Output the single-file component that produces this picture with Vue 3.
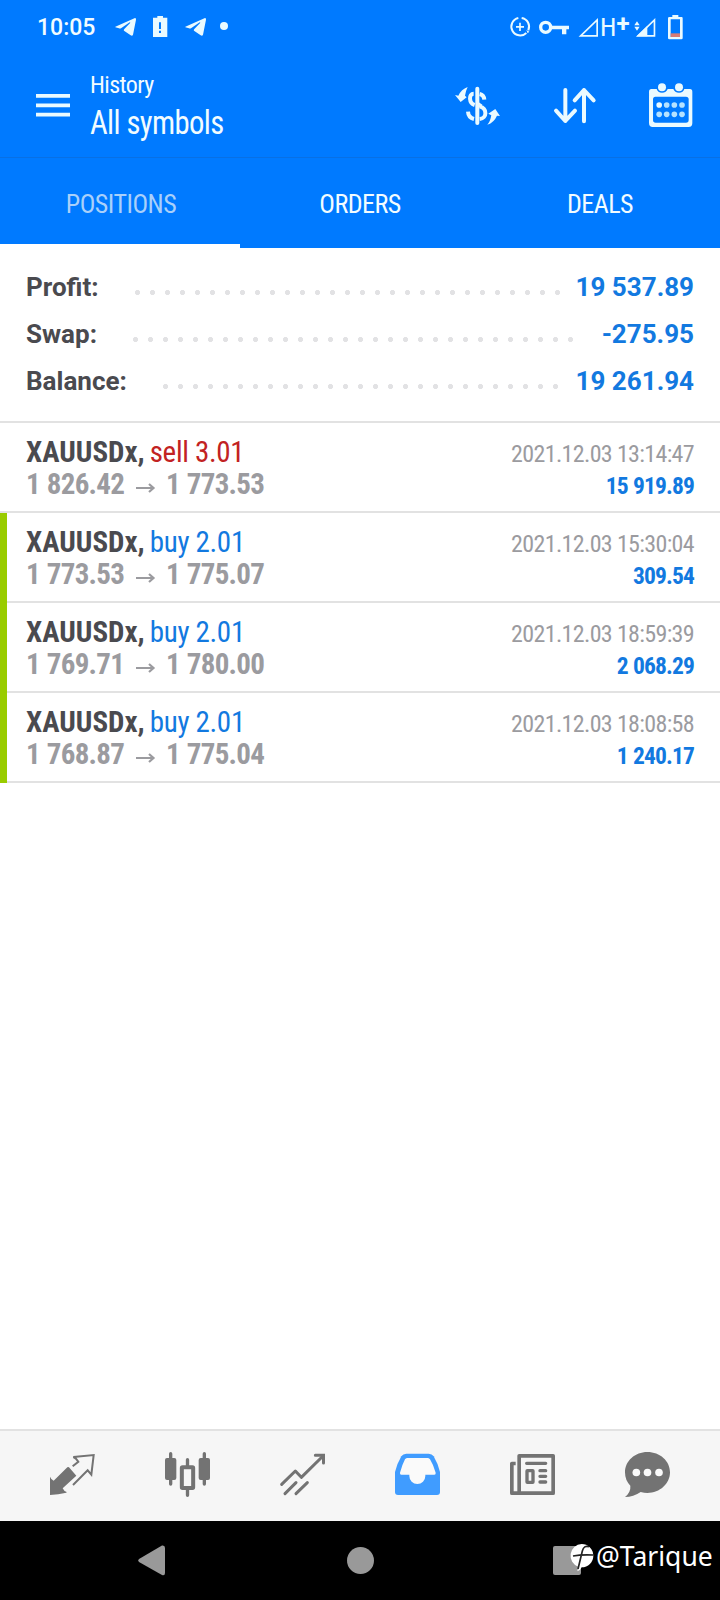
<script setup>
const tabs = ['POSITIONS', 'ORDERS', 'DEALS']
const active = 'POSITIONS'

const summary = [
  { label: 'Profit:', value: '19 537.89', start: 104, leader: 435 },
  { label: 'Swap:', value: '-275.95', start: 102, leader: 450 },
  { label: 'Balance:', value: '19 261.94', start: 132, leader: 405 },
]

const deals = [
  { symbol: 'XAUUSDx,', side: 'sell', volume: '3.01', open: '1 826.42', close: '1 773.53', time: '2021.12.03 13:14:47', profit: '15 919.89', marked: false },
  { symbol: 'XAUUSDx,', side: 'buy', volume: '2.01', open: '1 773.53', close: '1 775.07', time: '2021.12.03 15:30:04', profit: '309.54', marked: true },
  { symbol: 'XAUUSDx,', side: 'buy', volume: '2.01', open: '1 769.71', close: '1 780.00', time: '2021.12.03 18:59:39', profit: '2 068.29', marked: true },
  { symbol: 'XAUUSDx,', side: 'buy', volume: '2.01', open: '1 768.87', close: '1 775.04', time: '2021.12.03 18:08:58', profit: '1 240.17', marked: true },
]
</script>

<template>
  <div class="screen">
    <header class="top">
      <div class="status">
        <span class="clock">10:05</span>
        <svg class="tg" viewBox="0 0 63 54" width="21" height="18"><path d="M1 26 L60 0 Q64 0 63 5 L54 50 Q52 55 47 52 L27 38 Q25 36 28 33 L46 14 Q45 12 42 14 L18 31 Q15 32 12 31 L1 28z" /></svg>
        <svg class="bat-alert" viewBox="0 0 43 63" width="14.3" height="21"><path fill-rule="evenodd" d="M13 0H30V5H43V63H0V5H13zM18 19V39H24V19zM18 44V51H24V44z" /></svg>
        <svg class="tg" viewBox="0 0 63 54" width="21" height="18"><path d="M1 26 L60 0 Q64 0 63 5 L54 50 Q52 55 47 52 L27 38 Q25 36 28 33 L46 14 Q45 12 42 14 L18 31 Q15 32 12 31 L1 28z" /></svg>
        <i class="more"></i>
        <span class="grow"></span>
        <svg class="saver" viewBox="210 50 60 60" width="20" height="20"><g fill="none" stroke="#eafaff" stroke-width="6"><path d="M235 53A26.500 26.500 0 1 0 259 98" /><path d="M245 53A26.500 26.500 0 0 1 265 90" /><path d="M240 67V92M228 79.500H252" stroke-width="5" /></g><path d="M259 89L268 94L263 99z" /></svg>
        <svg class="key" viewBox="297 57 90 45" width="30" height="15"><circle cx="317" cy="79" r="15" fill="none" stroke="#eafaff" stroke-width="10" /><path d="M334 74H387V85H379V100H366V85H334z" /></svg>
        <svg class="sig" viewBox="417 52 57 57" width="19" height="19"><path d="M422 105.500L471.500 58V105.500z" fill="none" stroke="#eafaff" stroke-width="5" /></svg>
        <svg class="net" viewBox="0 0 28 22" width="28" height="22"><text y="20" font-size="26.500" font-weight="450"><tspan x="-1" class="cond">H</tspan><tspan class="plus" dx="0" dy="-4.500">+</tspan></text></svg>
        <svg class="sig2" viewBox="582 52 64 57" width="21.300" height="19"><path d="M583 74L591 62L599 74zM583 78H599L591 90z" /><path d="M594 105.500L643.500 58V105.500z" fill="none" stroke="#eafaff" stroke-width="5" /><path d="M590 107L622 76V107z" /></svg>
        <svg class="bat" viewBox="685 41 44 74" width="14.700" height="24.700"><path fill-rule="evenodd" d="M698 41H716V47H726Q729 47 729 51V110Q729 114 725 114H689Q685 114 685 110V51Q685 47 689 47H698zM693 54V107H721V54z" /><path d="M693 96H721V107H693z" fill="#d97b76" /></svg>
      </div>

      <div class="bar">
        <svg class="menu" viewBox="0 0 34 23" width="34" height="23"><path d="M0 0H34V3.700H0zM0 9.500H34V13.200H0zM0 18.800H34V22.500H0z" /></svg>
        <div class="titles">
          <div class="sub"><span>History</span></div>
          <div class="main"><span>All symbols</span></div>
        </div>
        <span class="grow"></span>
        <svg class="dollar" viewBox="45 260 136 114" width="45.300" height="38"><g fill="none" stroke="#eafaff" stroke-width="12"><path d="M112 265V368" stroke-linecap="round" /><path d="M101 280C86 280 86 308 104 314M119 281Q132 284 133 298M119 318C142 324 142 354 119 356M84 334Q85 352 102 356M112 310L124 318" /></g><path d="M83 260Q77 272 75 286L80 291L62 305L45 284L55 286Q64 267 83 260z" /><path d="M142 373Q151 364 154 345L145 340L166 326L180 347L171 346Q162 367 142 373z" /></svg>
        <svg class="sort" viewBox="341 263 126 106" width="42" height="35.300"><path d="M375 269V362M347 331L375 362L404 331M431 363V269M403 300L431 269L460 300" fill="none" stroke="#eafaff" stroke-width="12" stroke-linecap="round" stroke-linejoin="round" /></svg>
        <svg class="cal" viewBox="627 248 131 133" width="43.700" height="44.300"><path fill-rule="evenodd" d="M634 266H650Q653 277 666 277T683 266H700Q704 277 717 277T733 266H750Q757 266 757 274V368Q757 380 746 380H638Q627 380 627 368V274Q627 266 634 266zM646 289Q639 289 639 297V359Q639 367 647 367H738Q746 367 746 359V297Q746 289 738 289z" /><circle cx="666" cy="261" r="12" /><circle cx="717" cy="261" r="12" /><circle cx="657.500" cy="314" r="8.500" /><g fill="#b5e2ff"><circle cx="680" cy="314" r="8.500" /><circle cx="703" cy="314" r="8.500" /><circle cx="726" cy="314" r="8.500" /><circle cx="657.500" cy="342" r="8.500" /><circle cx="680" cy="342" r="8.500" /><circle cx="703" cy="342" r="8.500" /><circle cx="726" cy="342" r="8.500" /></g></svg>
      </div>

      <nav class="tabs">
        <div v-for="t in tabs" :key="t" class="tab" :class="{ on: t === active }"><span>{{ t }}</span></div>
      </nav>
    </header>

    <section class="summary">
      <div v-for="s in summary" :key="s.label" class="sum">
        <span class="label" :style="{ width: s.start + 'px' }">{{ s.label }}</span>
        <i class="leader" :style="{ width: s.leader + 'px' }"></i>
        <span class="total">{{ s.value }}</span>
      </div>
    </section>

    <main class="list">
      <article v-for="d in deals" :key="d.time" class="deal" :class="{ marked: d.marked }">
        <div class="line">
          <span class="sym">{{ d.symbol }}</span>
          <span class="side" :class="d.side">{{ d.side }} {{ d.volume }}</span>
          <span class="time">{{ d.time }}</span>
        </div>
        <div class="line">
          <span class="open">{{ d.open }}</span>
          <svg class="arrow" viewBox="0 0 20 12" width="20" height="12"><path d="M0 6H17M13 2L17.500 6L13 10" /></svg>
          <span class="close">{{ d.close }}</span>
          <span class="profit">{{ d.profit }}</span>
        </div>
      </article>
    </main>

    <nav class="dock">
      <svg viewBox="0 0 135 135"><path d="M0 74Q4 84 11 86L52 46Q54 44 57 46L79 71L38 109Q42 118 50 120L49 122Q25 127 0 129z" /><path class="st" stroke-width="6" d="M68 43L85 29Q78 18 70 15L131 9L124 68L113 55L69 99" /></svg>
      <svg viewBox="0 0 135 135"><rect y="18" width="34" height="66" rx="6" /><rect x="101" y="18" width="34" height="66" rx="6" /><path class="st" stroke-width="10" stroke-linecap="round" d="M17 5V96M118 5V96M67.500 23V42M67.500 110V130" /><rect class="st" x="50.500" y="46" width="34" height="62" rx="2" stroke-width="12" /></svg>
      <svg viewBox="0 0 135 135"><path class="st" stroke-width="9" stroke-linecap="round" stroke-linejoin="round" d="M5 97L46 57L64 76L129 12M15 125L48 92M48 125L82 92" /><path class="st" stroke-width="9" stroke-linecap="round" d="M106 10H130.500V33" /></svg>
      <svg class="active" viewBox="0 0 135 135"><path fill-rule="evenodd" d="M0 60Q7 33 19 13Q24 5 34 5H101Q111 5 116 13Q128 33 135 60V120Q135 129 126 129H9Q0 129 0 120z" /><path class="hole" d="M15 62Q22 37 30 22Q33 18 38 18H97Q102 18 105 22Q115 38 122 62Q123 68 118 68H91V72A24 24 0 0 1 43 72V68H19Q14 68 15 62z" /></svg>
      <svg viewBox="0 0 135 135"><path class="st" stroke-width="11" stroke-linejoin="round" d="M27.500 11.500H129.500V123.500H27.500zM17 34.500H5.500V123.500H28" /><path class="st" stroke-width="10" stroke-linecap="round" d="M50 34H107M90 56H107M90 73H107M90 90H107" /><rect class="st" x="51" y="56" width="18" height="35" rx="1" stroke-width="10" /></svg>
      <svg viewBox="0 0 135 135"><path d="M67 0C105 0 135 27 135 61S105 123 67 123Q58 123 47 120Q25 135 0 135Q18 120 16 101Q0 85 0 61C0 27 30 0 67 0z" /><g class="hole"><circle cx="34" cy="61.500" r="11.500" /><circle cx="67.500" cy="61.500" r="11.500" /><circle cx="102" cy="61.500" r="11.500" /></g></svg>
    </nav>

    <footer class="system">
      <svg class="back" viewBox="0 0 27 31" width="27" height="31"><path d="M1 14L24 .6Q27 0 27 3V28Q27 31 24 30L1 17Q-.8 15.500 1 14z" /></svg>
      <i class="home"></i>
      <i class="recent"></i>
      <div class="watermark">
        <svg viewBox="0 0 72 84" width="24" height="28"><path d="M35 0A35 35 0 0 1 35 70Q31 80 22 82L25 68A35 35 0 0 1 35 0z" fill="#fff" /><path d="M57 8Q42 3 37 21L24 75M9 36Q35 31 70 33" fill="none" stroke="#222" stroke-width="5" /></svg>
        <span>@Tarique</span>
      </div>
    </footer>
  </div>
</template>

<style>
body { margin: 0; background: #fff; }
</style>

<style scoped>
.screen { width: 720px; height: 1600px; display: flex; flex-direction: column; background: #fff; font-family: "Roboto", "Liberation Sans", sans-serif; white-space: nowrap; overflow: hidden; }
.screen svg { display: block; flex: none; overflow: visible; }
i { display: block; flex: none; }
.grow { flex: 1; }
.top { background: #007aff; color: #f2fcff; fill: #eafaff; }
.status { height: 54px; display: flex; align-items: center; padding: 0 37px 0 37px; box-sizing: border-box; }
.clock { width: 78px; font-size: 23px; font-weight: 500; }
.tg { margin-right: 17px; }
.bat-alert { margin-right: 17.700px; margin-top: -1px; }
.tg + .more { margin-left: -3px; }
.more { width: 8px; height: 8px; border-radius: 50%; background: #eafaff; margin-top: -2px; }
.saver { margin-right: 9px; }
.key { margin-right: 10px; }
.sig { margin-right: 3px; }
.net { margin-right: 5px; }
.cond { font-stretch: 75%; }
.plus { font-size: 24px; font-weight: 700; }
.sig2 { margin-right: 13px; }
.bar { height: 104px; display: flex; align-items: flex-start; padding: 0 27px 0 36px; border-bottom: 1px solid #0870e4; box-sizing: border-box; }
.menu { margin-top: 40px; }
.titles { margin-left: 20px; font-stretch: 75%; }
.sub { font-size: 24px; line-height: 28px; margin-top: 17px; letter-spacing: -.6px; }
.main { font-size: 32.500px; line-height: 38px; margin-top: 5px; font-weight: 450; letter-spacing: -.65px; transform: scaleX(.945); transform-origin: left; }
.dollar { margin: 33px 54px 0 0; }
.sort { margin: 34px 53px 0 0; }
.cal { margin-top: 28.500px; }
.tabs { height: 90px; display: grid; grid-template-columns: repeat(3, 1fr); }
.tab { box-sizing: border-box; text-align: center; font-size: 26px; line-height: 30px; padding-top: 30.500px; font-stretch: 75%; font-weight: 430; letter-spacing: -.5px; border-bottom: 4px solid transparent; }
.tab.on { color: #a9d0fa; border-color: #fff; }
.tab.on span { margin-left: 2px; }
.summary { height: 173px; box-sizing: content-box; border-bottom: 2px solid #e2e2e2; padding: 0 26px; display: flex; flex-direction: column; }
.sum { height: 47px; display: flex; align-items: flex-start; font-size: 26px; line-height: 30px; font-weight: 700; color: #4a4a4f; }
.sum:first-child { margin-top: 24px; }
.leader { height: 5px; margin-top: 18px; background: radial-gradient(circle at center, #e2e2e4 2.200px, transparent 2.900px) 0 0 / 15px 5px repeat-x; }
.total { flex: 1; text-align: right; color: #1279e0; }
.deal { height: 90px; box-sizing: border-box; border-bottom: 2px solid #e2e2e2; padding: 13px 26px 0; position: relative; }
.deal.marked::before { content: ""; position: absolute; left: 0; top: 0; width: 7px; height: 90px; background: #99cc00; }
.line { display: flex; align-items: baseline; height: 32px; line-height: 32px; font-size: 29px; font-stretch: 75%; }
.sym { font-weight: 700; color: #4a4a4f; margin-right: 5px; }
.side { letter-spacing: -.3px; }
.buy { color: #1279e0; }
.sell { color: #c22222; }
.time { margin-left: auto; font-size: 24px; letter-spacing: -.65px; color: #9b9b9f; }
.open, .close { font-weight: 700; letter-spacing: -.75px; word-spacing: 1px; color: #9b9b9f; }
.open { width: 110px; }
.arrow { fill: none; stroke: #9b9b9f; stroke-width: 2.200; margin-right: 10px; }
.profit { margin-left: auto; font-size: 23.500px; font-weight: 700; letter-spacing: -.85px; word-spacing: .5px; color: #1279e0; }
.dock { margin-top: auto; height: 92px; box-sizing: border-box; border-top: 2px solid #e2e2e2; background: #f6f6f6; display: flex; justify-content: space-between; padding: 21px 50px 0; fill: #737373; }
.dock svg { width: 45px; height: 45px; }
.dock .st { fill: none; stroke: #737373; }
.dock .active { fill: #409cff; }
.hole { fill: #fafafa; }
.system { height: 79px; background: #000; display: flex; align-items: flex-start; fill: #999; position: relative; }
.back { margin: 24px 0 0 138px; }
.home { width: 27px; height: 27px; border-radius: 50%; background: #999; margin: 26px 0 0 182px; }
.recent { width: 28px; height: 29px; border-radius: 2px; background: #999; margin: 25px 0 0 179px; }
.watermark { position: absolute; left: 570px; top: 23px; display: flex; color: #fff; font: 26.500px/34px "Noto Sans", sans-serif; }
.watermark span { margin: -5px 0 0 2px; }
</style>
